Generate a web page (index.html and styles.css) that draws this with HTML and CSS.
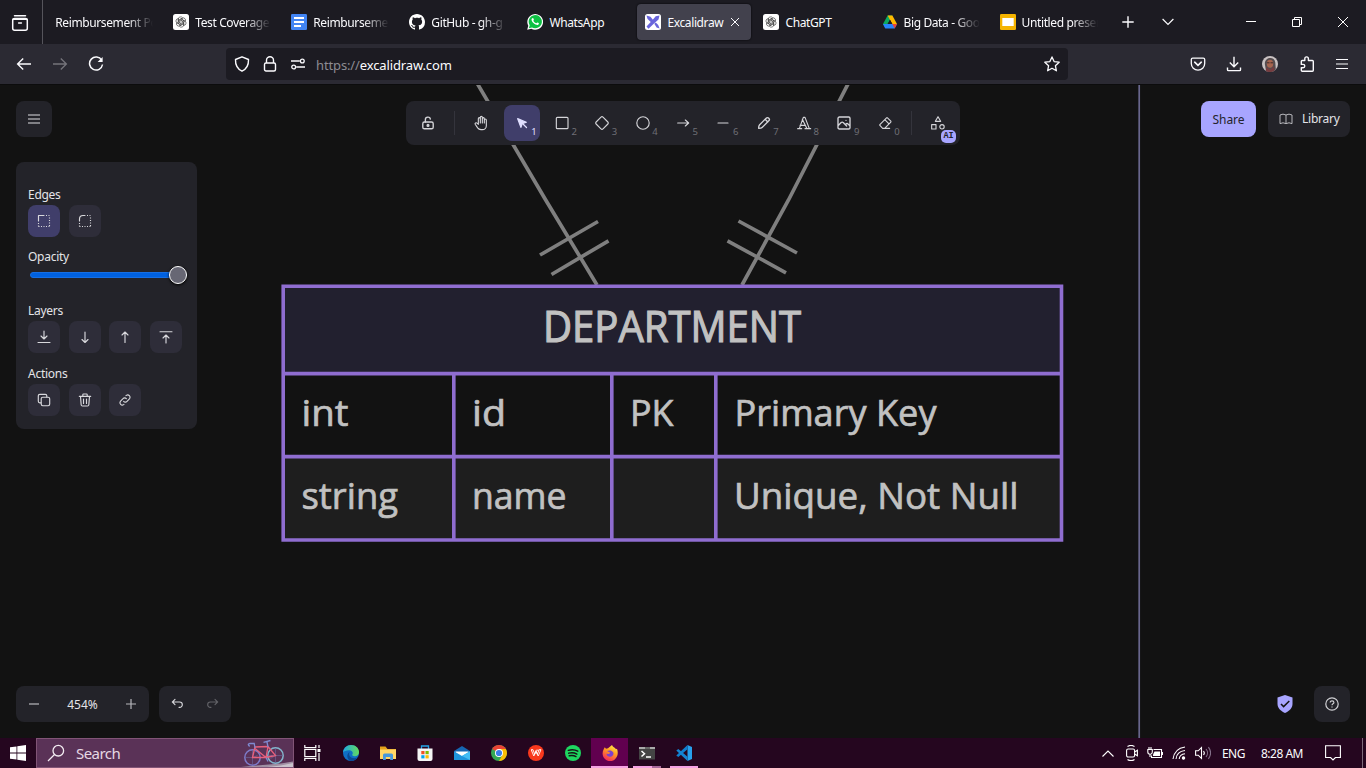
FILE: index.html
```html
<!DOCTYPE html>
<html lang="en">
<head>
<meta charset="utf-8">
<title>Excalidraw</title>
<link rel="stylesheet" href="styles.css">
</head>
<body>
<svg width="0" height="0" class="defs" aria-hidden="true">
  <defs>
    <symbol id="gpt" viewBox="0 0 16 16">
      <rect width="16" height="16" rx="2.5" fill="#fff"/>
      <g fill="none" stroke="#333" stroke-width=".6">
        <g id="petal"><path d="M5.300 9.600V5.100a2.300 2.300 0 0 1 4.300-1.100M6.700 8.800V5.700l3-1.700"/></g>
        <use href="#petal" transform="rotate(60 8 8)"/><use href="#petal" transform="rotate(120 8 8)"/><use href="#petal" transform="rotate(180 8 8)"/><use href="#petal" transform="rotate(240 8 8)"/><use href="#petal" transform="rotate(300 8 8)"/>
      </g>
    </symbol>
  </defs>
</svg>

<header class="tabbar">
  <div class="fxview"><svg width="18" height="18" viewBox="0 0 18 18" fill="none" stroke="#fbfbfe" stroke-width="1.5" stroke-linecap="round"><path d="M3.5 1.8h11"/><rect x="1.7" y="4.6" width="14.6" height="11.6" rx="2"/><path d="M2 5.2h14M7.6 9h2.8"/></svg></div>
  <div class="tabs">
    <div class="tab"><span class="title fade">Reimbursement Po</span></div>
    <div class="tab"><svg class="fav"><use href="#gpt"/></svg><span class="title fade">Test Coverage</span></div>
    <div class="tab"><svg class="fav" viewBox="0 0 16 16"><rect width="16" height="16" rx="1.3" fill="#4285f4"/><path d="M3 4h10M3 8h10M3 12h7" stroke="#fff" stroke-width="1.9"/></svg><span class="title fade">Reimbursemen</span></div>
    <div class="tab"><svg class="fav" viewBox="0 0 16 16"><path fill="#fff" d="M8 0C3.58 0 0 3.58 0 8c0 3.54 2.29 6.53 5.47 7.59.4.07.55-.17.55-.38 0-.19-.01-.82-.01-1.49-2.01.37-2.53-.49-2.69-.94-.09-.23-.48-.94-.82-1.13-.28-.15-.68-.52-.01-.53.63-.01 1.08.58 1.23.82.72 1.21 1.87.87 2.33.66.07-.52.28-.87.51-1.07-1.78-.2-3.64-.89-3.64-3.95 0-.87.31-1.59.82-2.15-.08-.2-.36-1.02.08-2.12 0 0 .67-.21 2.2.82.64-.18 1.32-.27 2-.27s1.36.09 2 .27c1.53-1.04 2.2-.82 2.2-.82.44 1.1.16 1.92.08 2.12.51.56.82 1.27.82 2.15 0 3.07-1.87 3.75-3.65 3.95.29.25.54.73.54 1.48 0 1.07-.01 1.93-.01 2.2 0 .21.15.46.55.38A8.01 8.01 0 0 0 16 8c0-4.42-3.58-8-8-8z"/></svg><span class="title fade">GitHub - gh-g</span></div>
    <div class="tab"><svg class="fav" viewBox="0 0 16 16"><path d="M.2 15.8l1.1-4A7.9 7.9 0 1 1 4.3 14.8z" fill="#fff"/><path d="M1.9 14.2l.8-3A6.6 6.6 0 1 1 5 13.4z" fill="#0dc143"/><path d="M5.4 4.2c.4-.3.8-.2 1 .3l.5 1.2c.1.4-.5.8-.6 1.1.6 1.2 1.5 2 2.8 2.5.4 0 .8-1 1.2-.9l1.5.7c.3.3-.1 1.4-.8 1.8-1.500.8-6.500-2.300-6.500-5.300 0-.6.3-1.100.9-1.400z" fill="#fff"/></svg><span class="title">WhatsApp</span></div>
    <div class="tab active"><svg class="fav" viewBox="0 0 16 16"><rect width="16" height="16" rx="2.500" fill="#fff"/><g fill="#6965db"><path d="M1.500 1.500l4 1.200 3 3.800-2.200 2L2.600 5z"/><path d="M14.500 1.500l-3.800.8-4 4.700-5.200 5.500 2 2.300L9 9.600l4.500-4z"/><path d="M9.300 9.800l1.500-1.300 2.400 2.600 1.400 3.400-3-1z"/></g></svg><span class="title">Excalidraw</span><svg class="close" width="10" height="10" viewBox="0 0 10 10" stroke="#fbfbfe" stroke-width="1"><path d="M1 1l8 8M9 1l-8 8"/></svg></div>
    <div class="tab"><svg class="fav"><use href="#gpt"/></svg><span class="title">ChatGPT</span></div>
    <div class="tab"><svg class="fav" viewBox="0 0 16 16"><path d="M5.600 1.500h4.800L8 5.700 3.400 14.300 1 10z" fill="#0da960"/><path d="M5.600 1.500h4.800L15 10h-4.700z" fill="#ffba00"/><path d="M1 10h14l-2.300 4.500H3.300z" fill="#2684fc"/><path d="M10.300 10H15l-2.300 4.500z" fill="#ea4335"/><path d="M8 5.700L5.600 10h4.700z" fill="#1c1b22"/></svg><span class="title fade">Big Data - Goo</span></div>
    <div class="tab"><svg class="fav" viewBox="0 0 16 16"><rect width="16" height="16" rx="1.300" fill="#f5b400"/><rect x="2.300" y="4" width="11.400" height="8" fill="#fff"/></svg><span class="title fade">Untitled presen</span></div>
  </div>
  <div class="tabtools">
    <svg width="12" height="12" viewBox="0 0 12 12" stroke="#fbfbfe" stroke-width="1.400"><path d="M6 .3v11.400M.3 6h11.400"/></svg>
    <svg width="12" height="8" viewBox="0 0 12 8" fill="none" stroke="#fbfbfe" stroke-width="1.200"><path d="M.6 1l5.400 5.400L11.400 1"/></svg>
  </div>
  <div class="winbtns">
    <svg width="10" height="10" viewBox="0 0 10 10" stroke="#fff"><path d="M0 4.500h10"/></svg>
    <svg width="10" height="10" viewBox="0 0 10 10" fill="none" stroke="#fff"><path d="M.5 2.500h7v7h-7zM2.500 2.500v-2h7v7h-2"/></svg>
    <svg width="10" height="10" viewBox="0 0 10 10" stroke="#fff"><path d="M0 0l10 10M10 0L0 10"/></svg>
  </div>
</header>

<nav class="navbar">
  <div class="navleft">
    <svg width="16" height="16" viewBox="0 0 16 16" fill="none" stroke="#fbfbfe" stroke-width="1.400"><path d="M15 8H1.500M7.200 2.500L1.600 8l5.600 5.500"/></svg>
    <svg width="16" height="16" viewBox="0 0 16 16" fill="none" stroke="#75747b" stroke-width="1.300"><path d="M1 8h13.500M8.800 2.500L14.400 8l-5.600 5.500"/></svg>
    <svg width="16" height="16" viewBox="0 0 16 16" fill="none" stroke="#fbfbfe" stroke-width="1.500"><path d="M13.700 4.300A6.500 6.500 0 1 0 14.500 8.500"/><path d="M14.600 1v5h-5z" fill="#fbfbfe" stroke="none"/></svg>
  </div>
  <div class="urlbar">
    <svg width="16" height="16" viewBox="0 0 16 16" fill="none" stroke="#fbfbfe" stroke-width="1.400" stroke-linejoin="round"><path d="M8 .8l6.500 2.700c.2 5-1.600 9.300-6.500 11.700C3.100 12.800 1.300 8.500 1.500 3.500z"/></svg>
    <svg width="14" height="16" viewBox="0 0 14 16" fill="none" stroke="#fbfbfe" stroke-width="1.400"><rect x="1.500" y="7" width="11" height="8" rx="1.500"/><path d="M3.500 7V4.200a3.500 3.500 0 0 1 7 0V7"/></svg>
    <svg width="16" height="12" viewBox="0 0 16 12" fill="none" stroke="#fbfbfe" stroke-width="1.300"><path d="M1 3h8.800M6.200 9H15"/><circle cx="12.300" cy="3" r="1.900"/><circle cx="3.700" cy="9" r="1.900"/></svg>
    <span class="url"><i>https://</i>excalidraw.com</span>
    <svg class="star" width="16" height="16" viewBox="0 0 16 16" fill="none" stroke="#fbfbfe" stroke-width="1.300" stroke-linejoin="round"><path d="M8 .9l2.100 4.700 5.100.6-3.800 3.500 1 5.100L8 12.300l-4.400 2.500 1-5.100L.8 6.200l5.100-.6z"/></svg>
  </div>
  <div class="navright">
    <svg width="16" height="16" viewBox="0 0 16 16" fill="none" stroke="#fbfbfe" stroke-width="1.300" stroke-linecap="round"><path d="M2.700 2.200h10.600c.8 0 1.400.6 1.400 1.400V7.500a6.700 6.700 0 0 1-13.400 0V3.600c0-.8.6-1.400 1.400-1.400z"/><path d="M4.700 6.200L8 9.300l3.300-3.100" stroke-width="1.600"/></svg>
    <svg width="16" height="16" viewBox="0 0 16 16" fill="none" stroke="#fbfbfe" stroke-width="1.400"><path d="M8 .7v10M3.800 6.600L8 10.800l4.200-4.200M1.500 11.500v2.200c0 .5.400.9.900.9h11.200c.5 0 .9-.4.900-.9v-2.200"/></svg>
    <svg width="16" height="16" viewBox="0 0 16 16"><circle cx="8" cy="8" r="8" fill="#c9c2c3"/><path d="M3 9C1.500 1 12.500-.5 13.300 6.500l.5 7A8 8 0 0 1 4 14.900z" fill="#544c4f"/><ellipse cx="8" cy="7.800" rx="3.200" ry="4" fill="#a5644f"/><path d="M5 6.800h2.500m1 0H11" stroke="#3f2928"/><path d="M4 11l4 2.500 4-3 .5 4A8 8 0 0 1 4 14.900z" fill="#763d40"/></svg>
    <svg width="16" height="16" viewBox="0 0 16 16" fill="none" stroke="#fbfbfe" stroke-width="1.400" stroke-linejoin="round"><path d="M5.800 4.500V2.700a1.800 1.800 0 0 1 3.600 0v1.800h4c.5 0 .9.400.9.900v8.900c0 .5-.4.900-.9.900H3.200c-.5 0-.9-.4-.9-.9v-2.500h1.800a1.700 1.700 0 0 0 0-3.400H2.300v-3c0-.5.400-.9.900-.9z"/></svg>
    <svg width="14" height="12" viewBox="0 0 14 12" stroke="#fbfbfe" stroke-width="1.200"><path d="M1 1.500h12M1 6h12M1 10.500h12"/></svg>
  </div>
</nav>

<main class="app">
  <svg class="scene" width="1366" height="654" viewBox="0 84 1366 654">
    <g fill="none" stroke="#7f7f7f" stroke-width="3.700">
      <path d="M477 83L545.700 200L597 285M848.500 83L788.500 200L742 285"/>
      <path d="M540 255l58-33.500M551.500 274.500l57-33.700M738.500 221l58.500 32M727.500 240.800l58.500 32"/>
    </g>
    <rect x="283" y="286.300" width="779" height="87.200" fill="#22202f"/>
    <rect x="283" y="456.500" width="779" height="83.500" fill="#1e1e1e"/>
    <path d="M283.200 286.300H1061.500V540H283.200zM283 373.600H1062M283 456.600H1062M453.800 373.500V540M611.800 373.500V540M715.800 373.500V540" fill="none" stroke="#8f6dd0" stroke-width="3.600"/>
    <g class="cells">
      <text class="head" x="543" y="342" textLength="258" lengthAdjust="spacingAndGlyphs">DEPARTMENT</text>
      <text x="301.500" y="425.700" textLength="47" lengthAdjust="spacingAndGlyphs">int</text>
      <text x="472" y="425.700" textLength="34" lengthAdjust="spacingAndGlyphs">id</text>
      <text x="630" y="425.700" textLength="43.500" lengthAdjust="spacingAndGlyphs">PK</text>
      <text x="734.500" y="425.700" textLength="202" lengthAdjust="spacingAndGlyphs">Primary Key</text>
      <text x="301.500" y="508.900" textLength="96.500" lengthAdjust="spacingAndGlyphs">string</text>
      <text x="472" y="508.900" textLength="94.500" lengthAdjust="spacingAndGlyphs">name</text>
      <text x="734" y="508.900" textLength="284.500" lengthAdjust="spacingAndGlyphs">Unique, Not Null</text>
    </g>
    <path d="M1139.200 84V738" stroke="#68668c" stroke-width="1.700"/>
  </svg>

  <div class="ui">
    <div class="top">
      <div class="sq"><svg width="12" height="10" viewBox="0 0 12 10" stroke="#a0a0a4" stroke-width="1.600"><path d="M0 1h12M0 5h12M0 9h12"/></svg></div>
      <div class="toolbar">
        <div class="tool"><svg viewBox="0 0 20 20"><rect x="3.500" y="8.800" width="13" height="8.400" rx="2"/><path d="M6.700 8.800V5.800c0-4 6-4 6.200-.6"/><circle cx="10" cy="13" r="1.100"/></svg></div>
        <span class="sep"></span>
        <div class="tools">
          <div class="tool"><svg viewBox="0 0 24 24"><path d="M8 13V5.500a1.500 1.500 0 0 1 3 0V12M11 5.500v-2a1.500 1.500 0 1 1 3 0V12M14 5.500a1.500 1.500 0 0 1 3 0V12M17 7.500a1.500 1.500 0 0 1 3 0V16a6 6 0 0 1-6 6h-2a7 6 0 0 1-5-2.700L3.300 13.900a1.500 1.500 0 0 1 .5-2 1.900 1.900 0 0 1 2.300.3L8 14"/></svg></div>
          <div class="tool on"><svg viewBox="0 0 22 22"><path class="solid" d="M5 5l4.500 12 1.800-5.200L17 10z"/><path d="M12 12l5.200 5.200"/></svg><b>1</b></div>
          <div class="tool"><svg viewBox="0 0 24 24"><rect x="3.500" y="3.500" width="17.500" height="17" rx="1.500"/></svg><b>2</b></div>
          <div class="tool"><svg viewBox="0 0 24 24"><path d="M10.500 3.200L3.200 10.500c-.9.900-.9 2.100 0 3l7.300 7.300c.9.900 2.100.9 3 0l7.300-7.300c.9-.9.900-2.100 0-3L13.500 3.200c-.9-.9-2.100-.9-3 0z"/></svg><b>3</b></div>
          <div class="tool"><svg viewBox="0 0 24 24"><circle cx="12" cy="12" r="9.300"/></svg><b>4</b></div>
          <div class="tool"><svg viewBox="0 0 24 24"><path d="M4 12h16.500M15.500 7.500l5 4.500-5 4.500"/></svg><b>5</b></div>
          <div class="tool"><svg viewBox="0 0 24 24"><path d="M4.500 12h15"/></svg><b>6</b></div>
          <div class="tool"><svg viewBox="0 0 20 20"><path d="M7.600 15.700L16 7.300a2 2 0 1 0-3.300-3.300L4.300 12.400c-.7.700-1 3-1 4.300 1.300 0 3.600-.3 4.300-1zM11.400 5.400l3.300 3.300"/></svg><b>7</b></div>
          <div class="tool"><svg viewBox="0 0 24 24"><path d="M2.500 20.500h6M13.500 20.500h8.500M6 15.500h8M9.500 6.500l7 14M5 20.500L11 3.500h2.500L20 20.500"/></svg><b>8</b></div>
          <div class="tool"><svg viewBox="0 0 20 20"><path d="M12.500 6.700h.01M4.200 2.500h11.600c.9 0 1.700.8 1.700 1.700v11.600c0 .9-.8 1.700-1.700 1.700H4.200c-.9 0-1.700-.8-1.700-1.700V4.200c0-.9.8-1.700 1.700-1.700zM2.500 13.500l4-4c.8-.8 1.800-.8 2.500 0l4.300 4.200M11.700 12l.8-.8c.8-.8 1.800-.8 2.500 0l2.400 2.400"/></svg><b>9</b></div>
          <div class="tool"><svg viewBox="0 0 24 24"><path d="M19 20H8.500l-4.200-4.300a1.200 1.200 0 0 1 0-1.400l10-10a1.200 1.200 0 0 1 1.400 0l5 5a1.200 1.200 0 0 1 0 1.400L11.500 20M18 13.300L11.700 7"/></svg><b>0</b></div>
        </div>
        <span class="sep"></span>
        <div class="tool"><svg viewBox="0 0 24 24"><path d="M12 2.500l-4 7h8zM2.500 14.500h6.500V21H2.500z"/><circle cx="18" cy="17.700" r="3.300"/></svg><em>AI</em></div>
      </div>
      <div class="actions">
        <div class="share">Share</div>
        <div class="library"><svg width="16" height="16" viewBox="0 0 20 20" fill="none" stroke="#b8b8bd" stroke-width="1.250"><path d="M2.500 15.800a7.500 7.500 0 0 1 7.500 0 7.500 7.500 0 0 1 7.500 0V5a7.500 7.500 0 0 0-7.500 0 7.500 7.500 0 0 0-7.500 0zM10 5v10.800"/></svg>Library</div>
      </div>
    </div>

    <aside class="panel">
      <h3>Edges</h3>
      <div class="row">
        <div class="btn on"><svg viewBox="0 0 16 16"><path d="M2.500 8V2.500H8"/><path class="dots" d="M10 2.500h4M13.500 4.500v10M2.500 10v4M2.500 13.500h12"/></svg></div>
        <div class="btn"><svg viewBox="0 0 16 16"><path d="M2.500 8V6A3.500 3.500 0 0 1 6 2.500H8"/><path class="dots" d="M10 2.500h4M13.500 4.500v10M2.500 10v4M2.500 13.500h12"/></svg></div>
      </div>
      <h3 class="up">Opacity</h3>
      <div class="slider"><span></span></div>
      <h3>Layers</h3>
      <div class="row">
        <div class="btn"><svg viewBox="0 0 16 16"><path d="M8 2v7.500M5 7l3 3 3-3M2 13.500h12"/></svg></div>
        <div class="btn"><svg viewBox="0 0 16 16"><path d="M8 3v10.500M5 10.500l3 3 3-3"/></svg></div>
        <div class="btn"><svg viewBox="0 0 16 16"><path d="M8 13.500V3M5 6l3-3 3 3"/></svg></div>
        <div class="btn"><svg viewBox="0 0 16 16"><path d="M8 14V6.500M5 9l3-3 3 3M2 2.700h12"/></svg></div>
      </div>
      <h3>Actions</h3>
      <div class="row">
        <div class="btn"><svg viewBox="0 0 16 16"><rect x="5.200" y="5.200" width="8.500" height="8.500" rx="1.600"/><path d="M10.800 5V3.800c0-.9-.6-1.500-1.500-1.500H3.800c-.9 0-1.500.6-1.500 1.500v5.500c0 .9.600 1.500 1.500 1.500H5"/></svg></div>
        <div class="btn"><svg viewBox="0 0 16 16"><path d="M2.300 4.300h11.400M3.500 4.500l.7 8.500c.1.700.5 1 1.200 1h5.200c.7 0 1.100-.3 1.200-1l.7-8.500M5.800 4V2.800c0-.5.300-.8.800-.8h2.800c.5 0 .8.300.8.800V4M6.500 7v4.500M9.500 7v4.500"/></svg></div>
        <div class="btn"><svg viewBox="0 0 20 20"><path d="M8.300 11.700a2.800 2.800 0 0 0 4.200 0l3.300-3.400a2.950 2.950 0 0 0-4.100-4.100l-.5.400M11.700 8.300a2.800 2.800 0 0 0-4.200 0l-3.300 3.400a2.950 2.950 0 0 0 4.100 4.100l.4-.4"/></svg></div>
      </div>
    </aside>

    <footer class="bottom">
      <div class="zoom"><svg width="10" height="10" viewBox="0 0 10 10"><path d="M0 5h10"/></svg><span>454%</span><svg width="10" height="10" viewBox="0 0 10 10"><path d="M0 5h10M5 0v10"/></svg></div>
      <div class="history">
        <svg width="16" height="16" viewBox="0 0 20 20"><path d="M7.500 10.800L4.200 7.500l3.300-3.300M4.200 7.500h9.100a3.300 3.300 0 0 1 0 6.700h-.8"/></svg>
        <svg class="off" width="16" height="16" viewBox="0 0 20 20"><path d="M12.500 10.800l3.300-3.300-3.300-3.300M15.800 7.500H6.700a3.300 3.300 0 0 0 0 6.700h.8"/></svg>
      </div>
      <svg class="shield" width="16" height="18" viewBox="0 0 16 18"><path d="M8 0l7.500 2.400v6.400c0 4-3 7.500-7.500 9.200C3.500 16.300.5 12.800.5 8.800V2.400z" fill="#a8a5ff"/><path d="M4 9l2.600 2.600L12.300 6" fill="none" stroke="#121212" stroke-width="1.500"/></svg>
      <div class="sq"><svg width="14" height="14" viewBox="0 0 14 14" fill="none" stroke="#cfcfd3" stroke-width="1.200"><circle cx="7" cy="7" r="6.200"/><path d="M5.200 5.500c0-2.300 3.700-2.100 3.700 0 0 1.400-1.900 1.300-1.900 2.700M7 9.400v1.200"/></svg></div>
    </footer>
  </div>
</main>

<div class="taskbar">
  <div class="start"><svg width="16" height="16" viewBox="0 0 16 16" fill="#fff"><path d="M0 2.300l6.500-.9v6.200H0zM7.300 1.300L16 0v7.600H7.300zM0 8.400h6.500v6.200L0 13.700zM7.300 8.400H16V16l-8.700-1.300z"/></svg></div>
  <div class="search">
    <svg width="18" height="18" viewBox="0 0 18 18" fill="none" stroke="#f3ecf2" stroke-width="1.300"><circle cx="11.300" cy="6.700" r="5.300"/><path d="M7.500 10.500L1 17"/></svg>
    <span>Search</span>
    <svg class="bike" width="56" height="28" viewBox="0 0 56 28" fill="none">
      <path d="M4 28c18-2 33-2 52-5.500v5.500z" fill="#a08fa3"/><path d="M30 28c10-1 18-2 26-4v4z" fill="#c9c2cb"/>
      <circle cx="15.500" cy="18.500" r="7.700" stroke="#7d7bc8" stroke-width="1.500"/><circle cx="38.500" cy="16.500" r="7.700" stroke="#83b5cc" stroke-width="1.500"/>
      <path d="M15.500 18.500l5-2M38.500 16.500l-5 3M15.500 11v15M8 18.500h15M38.500 9v15M31 16.500h15" stroke="#6d69a0" stroke-width=".6"/>
      <path d="M15.500 18.500L18 8l13-.5 7.500 9-9.500 2zM18 9.500l11 9 2-11" stroke="#e8607c" stroke-width="1.300"/>
      <path d="M18 9l-.8-4.500H13c-2.500 0-2 2.500 0 2.500M31 8l-1-5M26.500 3.300l7-1.800M29 18.500l2 4" stroke="#7f8ad0" stroke-width="1.300"/>
    </svg>
  </div>
  <div class="apps">
    <div class="task view"><svg width="18" height="16" viewBox="0 0 18 16" fill="none" stroke="#fff" stroke-width="1.200"><path d="M.8 0v2.700h11V0M.8 16v-2.700h11V16M.8 4.500h11v7H.8zM15 0v3M15 8v8"/><path d="M13.500 4h3v3h-3z" fill="#fff" stroke="none"/></svg></div>
    <div class="task"><svg viewBox="0 0 16 16"><defs><linearGradient id="eg" x1="0" x2="1"><stop stop-color="#1fa8e2"/><stop offset="1" stop-color="#63db5c"/></linearGradient></defs><circle cx="8" cy="8" r="8" fill="#0f6fc5"/><path d="M0 7.500C.3 3 4 0 8 0c5 0 8 3.500 8 7 0 3-2.200 4.200-4.500 4.200-2 0-2.700-.8-2.200-1.600 1.500-2-.5-4.300-3.300-4.300-3 0-5 1-6 2.200z" fill="url(#eg)"/><path d="M6.600 7c-2 4 2 7.500 7.800 5.600-1.400 2-4 3.400-6.400 3.400-3.500-.5-5.500-6.500-1.400-9z" fill="#0a4a94"/></svg></div>
    <div class="task"><svg viewBox="0 0 16 16"><path d="M0 1.500h5.500L7.500 4H16v10H0z" fill="#e3a21a"/><path d="M0 4.500h16V14H0z" fill="#ffd766"/><path d="M3 15V10a1.500 1.500 0 0 1 1.500-1.500h7A1.500 1.500 0 0 1 13 10v5h-2.800v-3H5.800v3z" fill="#4598dc"/></svg></div>
    <div class="task"><svg viewBox="0 0 16 16"><path d="M4.500 4V1h7v3" fill="none" stroke="#23a6e8" stroke-width="1.300"/><path d="M.5 3.500h15V14a2 2 0 0 1-2 2h-11a2 2 0 0 1-2-2z" fill="#f5f5f5"/><path d="M4.300 6h3.200v3.200H4.300z" fill="#f25022"/><path d="M8.500 6h3.200v3.200H8.500z" fill="#7fba00"/><path d="M4.300 10.200h3.200v3.200H4.300z" fill="#00a4ef"/><path d="M8.500 10.200h3.200v3.200H8.500z" fill="#ffb900"/></svg></div>
    <div class="task"><svg viewBox="0 0 16 16"><path d="M0 6l8-5 8 5v4H0z" fill="#1666b1"/><path d="M1.500 6.500h13V12h-13z" fill="#fff"/><path d="M0 6.300l8 4.700 8-4.700V15H0z" fill="#1f95dd"/><path d="M8 11l8-4.700V15z" fill="#43bdf4"/></svg></div>
    <div class="task"><svg viewBox="0 0 16 16"><circle cx="8" cy="8" r="8" fill="#34a853"/><path d="M8 8L1.100 4A8 8 0 0 1 14.900 4z" fill="#ea4335"/><path d="M8 4h6.900A8 8 0 0 1 8 16l3.500-6z" fill="#fbbc05"/><circle cx="8" cy="8" r="4" fill="#fff"/><circle cx="8" cy="8" r="3.100" fill="#3b7de8"/></svg></div>
    <div class="task"><svg viewBox="0 0 16 16"><circle cx="8" cy="8" r="8" fill="#f8391d"/><path d="M3 4.700h2l1.700 4.500L8 5.500l1.300 3.700L11 5.200H8.300M3.300 5l2.500 6L8 6.500l2.200 4.500L13 4.700h-2" fill="none" stroke="#fff" stroke-width=".9"/></svg></div>
    <div class="task"><svg viewBox="0 0 16 16"><circle cx="8" cy="8" r="8" fill="#1ed760"/><path d="M3.300 5.400c3.300-1 6.800-.7 9.500.8M3.700 8.200c2.900-.8 5.800-.5 8.200.9M4.200 10.800c2.400-.6 4.800-.4 6.800.8" fill="none" stroke="#151515" stroke-width="1.400" stroke-linecap="round"/></svg></div>
    <div class="task focus"><svg viewBox="0 0 16 16"><defs><linearGradient id="fx" x1=".8" y1="0" x2=".3" y2="1"><stop stop-color="#fff04a"/><stop offset=".45" stop-color="#ff9a22"/><stop offset="1" stop-color="#f5255c"/></linearGradient></defs><path d="M1.800 4l1-1.800 1.200 1.500 2-.5L10 0c.5 2 3 2.300 4 4.300l1-.5c2.300 6-1 12.200-7 12.200C2.500 16-1.500 10 1.800 4z" fill="url(#fx)"/><path d="M5 6c2-1 5-1 6.300 1.500.6 2.500-1 4.300-3.300 4.300-2 0-3.500-1.300-3.500-3l2.500.2 1.300-1.300z" fill="#7c3fd0"/></svg></div>
    <div class="task open"><svg viewBox="0 0 16 16"><path d="M0 2h16v12.500H0z" fill="#444"/><path d="M0 2h16v2H0z" fill="#aaa"/><path d="M6 2h5v2H6z" fill="#666"/><path d="M2.500 6l3 2.800-3 2.700M7 12h5" fill="none" stroke="#fff" stroke-width="1.500"/></svg></div>
    <div class="task open code"><svg viewBox="0 0 16 16"><path d="M11.500 0L16 2v12l-4.500 2z" fill="#27a0ec"/><path d="M11.500 0v4.300L2.300 12 .3 10.500z" fill="#0f7fd0"/><path d="M11.500 16v-4.300L2.300 4 .3 5.500z" fill="#1585d3"/></svg></div>
  </div>
  <div class="tray">
    <svg width="12" height="7" viewBox="0 0 12 7"><path d="M.5 6.500L6 1l5.500 5.500"/></svg>
    <svg width="12" height="16" viewBox="0 0 12 16"><rect x=".6" y="4" width="8" height="8" rx="1.500"/><path d="M8.600 7l2.800-1.800v5.600L8.600 9M1.500 1.500c2-1.300 5-1.300 7 0M1.500 14.500c2 1.300 5 1.300 7 0"/></svg>
    <svg width="16" height="12" viewBox="0 0 16 12"><path d="M6.500 2.500h8v8H4.500V8.500M2 0v2.500M4 0v2.500M.8 2.500h4.500V5a2 2 0 0 1-4.500 0zM3 7v3M15.500 5v3"/><path d="M7.500 4.500h5.500v4.500H6V7.500z" fill="#fff" stroke="none"/></svg>
    <svg width="14" height="14" viewBox="0 0 14 14"><path d="M1 13C2 6 6 2 13 1M4 13c.5-5 4-8 9-8.500M7.200 13c.3-3 2.500-5 5.800-5.300" /><circle cx="11.500" cy="12" r="1.200" fill="#fff"/></svg>
    <svg width="16" height="14" viewBox="0 0 16 14"><path d="M.6 4.800h2.600L6.500 1.500v11L3.200 9.200H.6zM8.500 5c1 1.200 1 2.800 0 4"/><path d="M11 3c2 2.300 2 5.700 0 8M13.400 1.200c2.700 3.500 2.700 8 0 11.600" stroke="#84718a"/></svg>
    <span class="lang">ENG</span><span class="time">8:28 AM</span>
    <svg class="note" width="16" height="16" viewBox="0 0 16 16"><path d="M.6 .8h14.800v11.700h-5L8 15l-2.400-2.500h-5z"/></svg>
    <i class="peek"></i>
  </div>
</div>
</body>
</html>
```
FILE: styles.css
```css
* { box-sizing: border-box; }
body { margin: 0; width: 1366px; height: 768px; overflow: hidden; display: flex; flex-direction: column; background: #121212; font-family: "Noto Sans", "Open Sans", sans-serif; font-size: 12px; color: #fbfbfe; }
svg { display: block; flex: none; }
.defs { position: absolute; }

/* Browser chrome */
.tabbar { height: 44px; background: #1c1b22; display: flex; flex: none; }
.fxview { width: 43px; border-right: 1px solid #55545b; padding: 14px 0 0 11px; margin-right: 2.200px; flex: none; }
.tabs { display: flex; width: 1063.500px; }
.tab { width: 114.050px; height: 36px; margin: 4px 2px; padding: 0 8px; display: flex; align-items: center; border-radius: 4px; flex: none; }
.tab.active { background: #42414d; box-shadow: 0 0 2px #000; }
.fav { width: 16px; height: 16px; margin-right: 6px; }
.title { white-space: nowrap; letter-spacing: -.38px; line-height: 18px; padding-top: 1px; flex: 1; min-width: 0; }
.fade { -webkit-mask: linear-gradient(90deg, #000 calc(100% - 26px), transparent); mask: linear-gradient(90deg, #000 calc(100% - 26px), transparent); }
.close { margin-right: 3px; }
.tabtools { display: flex; align-items: center; gap: 28px; padding-left: 13px; }
.winbtns { display: flex; align-items: center; gap: 36px; margin-left: auto; padding-right: 18px; }
.navbar { height: 40px; background: #2b2a33; display: flex; align-items: center; flex: none; }
.navleft { display: flex; gap: 20px; padding-left: 16px; width: 226px; }
.urlbar { width: 842px; height: 32px; background: #1c1b22; border-radius: 4px; display: flex; align-items: center; padding: 0 8px; gap: 13px; }
.url { font-size: 13px; letter-spacing: -.13px; margin-left: -3px; padding-top: 2px; line-height: 18px; }
.url i { font-style: normal; color: #8c8b92; }
.star { margin-left: auto; }
.navright { display: flex; align-items: center; gap: 20.3px; margin-left: auto; padding-right: 17px; }

/* Drawing area */
.app { flex: 1; position: relative; border-top: 1px solid #0c0c0d; }
.scene { position: absolute; left: 0; top: 0; margin-top: -1px; clip-path: inset(1px 0 0 0); }
.cells { font-family: "Open Sans", sans-serif; font-size: 37px; fill: #c1c1c1; stroke: #c1c1c1; stroke-width: .7px; }
.cells .head { font-size: 44.500px; stroke-width: 1.200px; }
.ui { position: relative; height: 653px; padding: 16px 16px 16px; display: flex; flex-direction: column; color: #e3e3e8; }
.top { display: flex; height: 44px; }
.sq { width: 36px; height: 36px; border-radius: 8px; background: #232329; display: grid; place-items: center; }
.toolbar { margin-left: 354px; width: 554px; height: 44px; padding: 4px; display: flex; align-items: center; justify-content: space-between; background: #232329; border-radius: 8px; }
.tools { display: flex; width: 439.5px; justify-content: space-between; }
.sep { width: 1px; height: 24px; background: #34343c; }
.tool { width: 36px; height: 36px; border-radius: 8px; position: relative; display: grid; place-items: center; }
.tool svg { width: 16px; height: 16px; fill: none; stroke: #d5d5d9; stroke-width: 1.700; stroke-linecap: round; stroke-linejoin: round; }
.tool.on { background: #403e6a; }
.tool.on svg { stroke: #e0dfff; }
.solid { fill: #e0dfff; }
.tool b { position: absolute; right: 3px; bottom: 3px; font-size: 9.500px; line-height: 12px; font-weight: 400; color: #6f6f76; }
.tool.on b { color: #e0dfff; }
.tool em { position: absolute; right: 0; bottom: -2px; width: 15px; height: 13px; border-radius: 5px; background: #a8a5ff; color: #232329; font: bold 8.500px/13px "Liberation Mono", monospace; text-align: center; }
.actions { margin-left: auto; display: flex; gap: 12px; height: 36px; }
.share { width: 55px; border-radius: 8px; background: #a8a5ff; color: #232329; line-height: 37px; text-align: center; letter-spacing: 0; }
.library { width: 82px; border-radius: 8px; background: #232329; display: flex; align-items: center; gap: 8px; padding-left: 10px; line-height: 38px; letter-spacing: -.25px; }
.panel { margin-top: 17px; width: 181px; height: 267px; border-radius: 8px; background: #232329; padding: 24px 12px 0; }
.panel h3 { margin: 0; height: 19px; line-height: 17px; font-size: 12px; font-weight: 400; letter-spacing: -.27px; }
.panel h3.up { line-height: 15px; }
.row { display: flex; gap: 8.500px; height: 32px; margin-bottom: 12px; }
.btn { width: 32px; height: 32px; border-radius: 8px; background: #2e2d39; display: grid; place-items: center; }
.btn svg { width: 16px; height: 16px; fill: none; stroke: #d8d8dc; stroke-width: 1.150; stroke-linecap: round; stroke-linejoin: round; }
.btn svg[viewBox="0 0 20 20"] { stroke-width: 1.400; }
.btn .dots { stroke-dasharray: 1 1.500; stroke-linecap: butt; }
.btn.on { background: #403e6a; }
.slider { margin: 4px 0 24px 2px; width: 157px; height: 6px; border-radius: 3px; background: #0061e0; border: 1px solid #166fe4; display: flex; align-items: center; justify-content: flex-end; }
.slider span { width: 18px; height: 18px; border-radius: 50%; background: #676774; border: 1px solid #fff; box-shadow: 0 1px 3px #000; margin-right: -1px; flex: none; }
.bottom { margin-top: auto; display: flex; height: 36px; align-items: center; }
.zoom { width: 133px; height: 36px; border-radius: 8px; background: #232329; display: flex; align-items: center; justify-content: space-between; padding: 0 13px; letter-spacing: 0; }
.zoom svg { stroke: #b7b7bc; stroke-width: 1.200; }
.history { margin-left: 10px; width: 72px; height: 36px; border-radius: 8px; background: #232329; display: flex; align-items: center; justify-content: space-between; padding: 0 10px; }
.history svg { fill: none; stroke: #d8d8dc; stroke-width: 1.400; stroke-linecap: round; }
.history .off { opacity: .35; }
.shield { margin: 0 21px 0 auto; }

/* Desktop taskbar */
.taskbar { height: 30px; flex: none; display: flex; background: #25061f; }
.start { width: 36px; padding: 7px 0 0 10px; }
.search { width: 258px; border: 1px solid #815476; background: #5a3257; display: flex; align-items: center; padding-left: 10px; }
.search span { font-size: 15px; margin-left: 11px; letter-spacing: -.55px; color: #e5d8e3; }
.bike { margin-left: auto; }
.apps { display: flex; }
.task { width: 37px; height: 30px; display: grid; place-items: center; position: relative; }
.task svg { width: 16px; height: 16px; }
.task.view { width: 38px; }
.task.view svg { width: 18px; }
.task.focus { background: #61004f; border-bottom: 2px solid #f5a2e3; padding-top: 2px; }
.task.open::after { content: ""; position: absolute; left: 5px; right: 4px; bottom: 0; height: 2px; background: linear-gradient(90deg, #f5a2e3 68%, #a9699c 68%); }
.task.code::after { background: #f5a2e3; }
.tray { margin-left: auto; display: flex; align-items: center; width: 264px; gap: 9px; }
.tray svg { fill: none; stroke: #fff; stroke-width: 1.100; }
.tray svg:first-child { margin-right: 3px; }
.lang { letter-spacing: -.55px; margin-left: 2px; width: 24px; }
.time { letter-spacing: -.5px; margin-left: 6px; width: 44px; white-space: nowrap; }
.note { margin-left: 11px; }
.peek { width: 1px; height: 30px; background: #7d6a7a; margin-left: 12px; }
```
